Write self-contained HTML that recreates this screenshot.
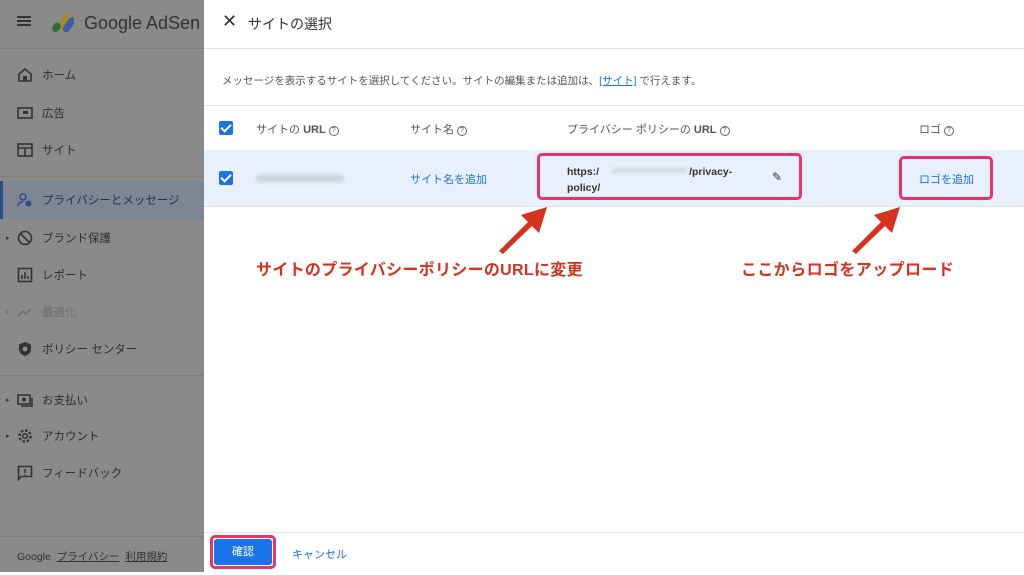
<!DOCTYPE html>
<html><head><meta charset="utf-8"><style>
*{margin:0;padding:0;box-sizing:border-box}
body{width:1024px;height:575px;overflow:hidden;position:relative;background:#fff;font-family:"Liberation Sans","Noto Sans CJK JP",sans-serif}
.side{position:absolute;left:0;top:0;width:204px;height:575px;background:#8a8a8a;color:#2e2e2e}
.side .it{position:absolute;left:0;width:204px;height:36px;font-size:11.5px;display:flex;align-items:center}
.side .ic{position:absolute;left:17px;width:16px;height:16px}
.side .tx{position:absolute;left:42px}
.hl{background:#7e8593}
.dlg{position:absolute;left:204px;top:0;width:820px;height:575px;background:#fff}
.a{position:absolute}
.hline{position:absolute;height:1px;background:#e4e4e4}
.cb{position:absolute;width:14px;height:14px;background:#1a73e8;border-radius:2px}
.cb:after{content:"";position:absolute;left:4px;top:1px;width:4px;height:8px;border:solid #fff;border-width:0 2px 2px 0;transform:rotate(45deg)}
.hd{font-size:11px;color:#555}
.q{display:inline-block;width:10px;height:10px;border:1px solid #666;border-radius:50%;font-size:7px;text-align:center;line-height:8px;margin-left:3px;vertical-align:1px}
.pink{position:absolute;border:3px solid #e8336b;border-radius:5px}
.red{position:absolute;color:#d5321f;font-weight:bold;font-size:16px;white-space:nowrap}
</style></head><body>
<div class="side">
 <div class="a" style="left:17px;top:16px;width:14px;height:2px;background:#333;box-shadow:0 4px 0 #333,0 8px 0 #333"></div>
 <svg class="a" style="left:50px;top:12px" width="24" height="22"><rect x="10" y="0" width="7" height="20" rx="3.5" transform="rotate(35 13 10)" fill="#a48a2a"/><rect x="3" y="10" width="7" height="10" rx="3.5" fill="#2f6b3a" transform="rotate(35 6 15)"/><rect x="16" y="4" width="7" height="17" rx="3.5" fill="#3a5ea8" transform="rotate(35 19 12)"/></svg>
 <div class="a" style="left:84px;top:13px;font-size:18px;color:#333;white-space:nowrap">Google AdSen</div>
 <div class="a" style="left:0;top:48px;width:204px;height:1px;background:#7d7d7d"></div>
 <div class="it" style="top:57px"><svg class="ic" viewBox="0 0 16 16"><path d="M2 7L8 2l6 5v7H2z" fill="none" stroke="#333" stroke-width="1.6"/><rect x="6" y="9" width="4" height="5" fill="#333"/></svg><span class="tx">ホーム</span></div>
 <div class="it" style="top:95px"><svg class="ic" viewBox="0 0 16 16"><rect x="1" y="3" width="14" height="10" fill="none" stroke="#333" stroke-width="1.6"/><rect x="6" y="6" width="5" height="3" fill="#333"/></svg><span class="tx">広告</span></div>
 <div class="it" style="top:132px"><svg class="ic" viewBox="0 0 16 16"><rect x="1" y="2" width="14" height="12" fill="none" stroke="#333" stroke-width="1.6"/><path d="M1 6h14M8 6v8" stroke="#333" stroke-width="1.6"/></svg><span class="tx">サイト</span></div>
 <div class="a" style="left:0;top:176px;width:204px;height:1px;background:#7d7d7d"></div>
 <div class="it hl" style="top:181px;height:38px"><div class="a" style="left:0;top:0;width:3px;height:38px;background:#2c4f8a"></div><svg class="ic" viewBox="0 0 16 16"><circle cx="6" cy="5" r="3" fill="none" stroke="#2c4f8a" stroke-width="1.6"/><path d="M1 14c0-3 2-4 5-4" fill="none" stroke="#2c4f8a" stroke-width="1.6"/><circle cx="11.5" cy="11.5" r="3" fill="#2c4f8a"/></svg><span class="tx" style="color:#26324a">プライバシーとメッセージ</span></div>
 <div class="it" style="top:220px"><span class="a" style="left:6px;font-size:7px">▸</span><svg class="ic" viewBox="0 0 16 16"><circle cx="8" cy="8" r="6.5" fill="none" stroke="#333" stroke-width="1.6"/><path d="M3.5 3.5l9 9" stroke="#333" stroke-width="1.6"/></svg><span class="tx">ブランド保護</span></div>
 <div class="it" style="top:257px"><svg class="ic" viewBox="0 0 16 16"><rect x="1.5" y="1.5" width="13" height="13" fill="none" stroke="#333" stroke-width="1.6"/><path d="M5 12V8M8 12V5M11 12V9" stroke="#333" stroke-width="1.6"/></svg><span class="tx">レポート</span></div>
 <div class="it" style="top:294px;color:#6e6e6e"><span class="a" style="left:6px;font-size:7px">▸</span><svg class="ic" viewBox="0 0 16 16"><path d="M1 12l5-5 3 3 5-5" fill="none" stroke="#6e6e6e" stroke-width="1.6"/></svg><span class="tx">最適化</span></div>
 <div class="it" style="top:331px"><svg class="ic" viewBox="0 0 16 16"><path d="M8 1l6 2.5V8c0 4-3 6-6 7-3-1-6-3-6-7V3.5z" fill="#333"/><circle cx="8" cy="8" r="2.5" fill="#8a8a8a"/></svg><span class="tx">ポリシー センター</span></div>
 <div class="a" style="left:0;top:375px;width:204px;height:1px;background:#7d7d7d"></div>
 <div class="it" style="top:382px"><span class="a" style="left:6px;font-size:7px">▸</span><svg class="ic" viewBox="0 0 16 16"><rect x="1" y="3" width="12" height="9" fill="none" stroke="#333" stroke-width="1.6"/><circle cx="7" cy="7.5" r="2" fill="#333"/><path d="M4 14h11V6" fill="none" stroke="#333" stroke-width="1.6"/></svg><span class="tx">お支払い</span></div>
 <div class="it" style="top:418px"><span class="a" style="left:6px;font-size:7px">▸</span><svg class="ic" viewBox="0 0 16 16"><circle cx="8" cy="8" r="5.5" fill="none" stroke="#333" stroke-width="2.4" stroke-dasharray="2.5 1.8"/><circle cx="8" cy="8" r="2.3" fill="none" stroke="#333" stroke-width="1.5"/></svg><span class="tx">アカウント</span></div>
 <div class="it" style="top:455px"><svg class="ic" viewBox="0 0 16 16"><path d="M1.5 1.5h13v10H4l-2.5 3z" fill="none" stroke="#333" stroke-width="1.6"/><path d="M8 4v4M8 9.5v1" stroke="#333" stroke-width="1.6"/></svg><span class="tx">フィードバック</span></div>
 <div class="a" style="left:0;top:536px;width:204px;height:1px;background:#7d7d7d"></div>
 <div class="a" style="left:17px;top:549px;font-size:10.5px;color:#333;white-space:nowrap">Google&nbsp;&nbsp;<u>プライバシー</u>&nbsp;&nbsp;<u>利用規約</u></div>
 <div class="a" style="left:0;top:572px;width:204px;height:3px;background:#fff"></div>
</div>
<div class="dlg">
 <div class="a" style="left:18px;top:11px;font-size:18px;color:#333">✕</div>
 <div class="a" style="left:44px;top:14px;font-size:14px;color:#333">サイトの選択</div>
 <div class="hline" style="left:0;top:48px;width:820px"></div>
 <div class="a" style="left:18px;top:73px;font-size:10.5px;color:#555;white-space:nowrap">メッセージを表示するサイトを選択してください。サイトの編集または追加は、<span style="color:#1a73e8;text-decoration:underline">[サイト]</span> で行えます。</div>
 <div class="hline" style="left:0;top:105px;width:820px"></div>
 <div class="cb" style="left:15px;top:121px"></div>
 <div class="a hd" style="left:52px;top:121px">サイトの <b>URL</b><span class="q">?</span></div>
 <div class="a hd" style="left:206px;top:121px">サイト名<span class="q">?</span></div>
 <div class="a hd" style="left:363px;top:121px">プライバシー ポリシーの <b>URL</b><span class="q">?</span></div>
 <div class="a hd" style="left:715px;top:121px">ロゴ<span class="q">?</span></div>
 <div class="a" style="left:0;top:150px;width:820px;height:57px;background:#e8f0fb;border-bottom:1px solid #dde3ec"></div>
 <div class="cb" style="left:15px;top:171px"></div>
 <div class="a" style="left:52px;top:175px;width:88px;height:7px;background:#c9cfd8;border-radius:4px;filter:blur(2px)"></div>
 <div class="a" style="left:206px;top:171px;font-size:11px;color:#1a73e8">サイト名を追加</div>
 <div class="a" style="left:363px;top:164px;font-size:10.5px;color:#333;line-height:16px;font-weight:bold;width:200px;white-space:nowrap">https:/<span style="display:inline-block;width:90px"></span>/privacy-<br>policy/</div>
 <div class="a" style="left:408px;top:168px;width:75px;height:5px;background:#d4d9e1;border-radius:3px;filter:blur(1.5px)"></div>
 <div class="a" style="left:568px;top:170px;font-size:12px;color:#333">✎</div>
 <div class="a" style="left:715px;top:171px;font-size:11px;color:#1a73e8">ロゴを追加</div>
 <div class="pink" style="left:333px;top:153px;width:265px;height:47px"></div>
 <div class="pink" style="left:695px;top:156px;width:94px;height:44px"></div>
 <div class="red" style="left:52px;top:256px;letter-spacing:0.3px">サイトのプライバシーポリシーのURLに変更</div>
 <div class="red" style="left:537px;top:256px;letter-spacing:0.4px">ここからロゴをアップロード</div>
 <div class="hline" style="left:0;top:532px;width:820px"></div>
 <div class="pink" style="left:6px;top:535px;width:66px;height:34px"></div>
 <div class="a" style="left:10px;top:539px;width:58px;height:26px;background:#1a73e8;border-radius:3px;color:#fff;font-size:11px;text-align:center;line-height:26px">確認</div>
 <div class="a" style="left:88px;top:546px;font-size:11px;color:#1a73e8">キャンセル</div>
</div>
<svg class="a" style="left:0;top:0" width="1024" height="575">
 <polygon points="499,251 528,222 521,215 547,207 539,233 532,226 503,254" fill="#d5321f"/>
 <polygon points="852,251 881,222 874,215 900,207 892,233 885,226 856,254" fill="#d5321f"/>
</svg>
</body></html>
